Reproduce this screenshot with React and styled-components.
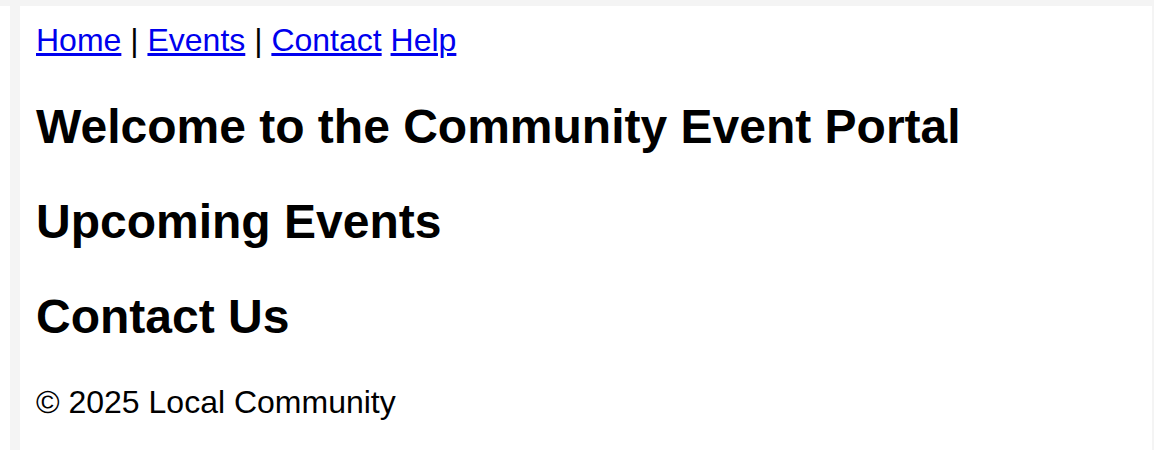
import React from 'react';
import styled, { createGlobalStyle } from 'styled-components';

const GlobalStyle = createGlobalStyle`
  html, body {
    margin: 0;
    padding: 0;
    background: #f4f4f4;
  }
  body {
    font-family: "Liberation Sans", Arial, Helvetica, sans-serif;
    color: #000;
  }
`;

const Page = styled.div`
  display: flex;
  align-items: stretch;
  gap: 10px;
  padding-top: 6px;
  padding-right: 2px;
  min-height: 444px;
`;

const Gutter = styled.div`
  width: 10px;
  flex: none;
  background: #ffffff;
`;

const Main = styled.main`
  flex: 1;
  background: #ffffff;
  padding: 16px 16px 1px 16px;
`;

const Nav = styled.nav`
  font-size: 32px;

  a {
    color: #0000ee;
    text-decoration: underline;
  }
`;

const Heading = styled.h2`
  font-size: 48px;
  font-weight: bold;
  margin: 40px 0;
`;

const Footer = styled.footer`
  font-size: 32px;
  margin: 40px 0;
`;

const App = () => {
  return (
    <>
      <GlobalStyle />
      <Page>
        <Gutter />
        <Main>
          <Nav>
            <a href="#home">Home</a> | <a href="#events">Events</a> |{' '}
            <a href="#contact">Contact</a> <a href="#help">Help</a>
          </Nav>
          <Heading as="h1">Welcome to the Community Event Portal</Heading>
          <Heading>Upcoming Events</Heading>
          <Heading>Contact Us</Heading>
          <Footer>© 2025 Local Community</Footer>
        </Main>
      </Page>
    </>
  );
};

export default App;
